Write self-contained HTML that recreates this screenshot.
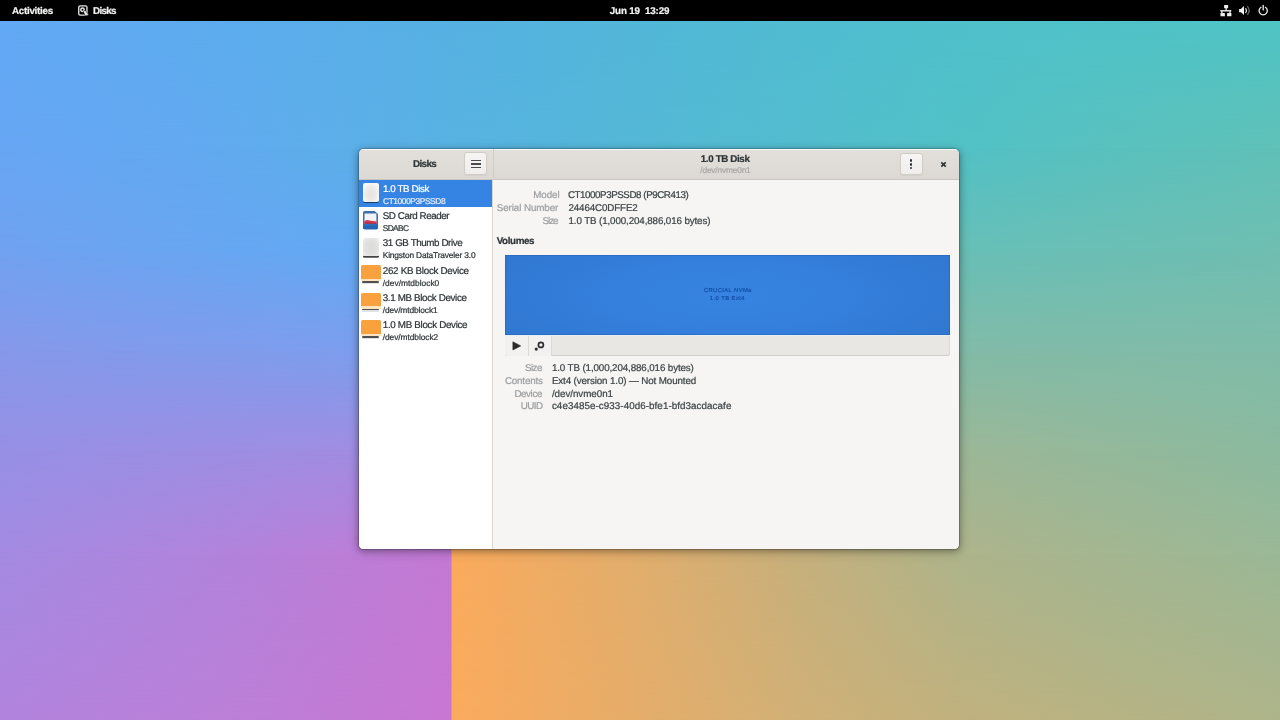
<!DOCTYPE html>
<html>
<head>
<meta charset="utf-8">
<title>Disks</title>
<style>
*{margin:0;padding:0;box-sizing:border-box;}
html,body{width:1280px;height:720px;overflow:hidden;}
body{font-family:"Liberation Sans",sans-serif;font-size:10px;color:#2e3436;position:relative;background:#5fa8f0;}
.a{position:absolute;}
.t{position:absolute;white-space:nowrap;line-height:14px;text-rendering:geometricPrecision;-webkit-text-stroke:0.22px currentColor;}
.wl{position:absolute;left:0;top:0;width:1280px;height:720px;}
#top{position:absolute;left:0;top:0;width:1280px;height:20.6px;background:#000;}
#win{position:absolute;left:359px;top:149px;width:600px;height:400px;border-radius:5px 5px 4.5px 4.5px;
  background:#f6f5f4;overflow:hidden;}
#shadow{position:absolute;left:359px;top:149px;width:600px;height:400px;border-radius:5px 5px 4.5px 4.5px;
  box-shadow:0 0 0 1px rgba(0,0,0,0.17),0 1.5px 6px 0.5px rgba(0,0,0,0.30),0 3px 12px 1px rgba(0,0,0,0.13);}
#hdr{position:absolute;left:0;top:0;width:600px;height:31px;
  background:linear-gradient(to bottom,#e3e0dc 0%,#dcd8d4 100%);border-bottom:1px solid #cbc5c0;
  box-shadow:inset 0 1px rgba(255,255,255,0.85);}
.btn{position:absolute;border:1px solid #d2ccc7;border-radius:3px;
  background:linear-gradient(to bottom,#f6f5f3,#f0eeec);box-shadow:0 1px 1px rgba(0,0,0,0.05);}
.ob{position:absolute;left:2.2px;width:19.5px;height:13.9px;background:#f9a13f;border-radius:1.5px 1.5px 0 0;}
.oc{position:absolute;left:2.2px;width:19.5px;height:2.2px;background:#fde3c0;border-radius:0 0 1px 1px;}
.od{position:absolute;left:3.2px;width:16.8px;height:1.5px;background:#505050;border-radius:1px;}
.og{position:absolute;left:3.2px;width:16.8px;height:1.3px;background:#dfe3e4;border-radius:1px;}
</style>
</head>
<body>
<div class="wl" style="background:linear-gradient(to right,#62a9f5 0px,#5aaeea 320px,#56b1e2 452px,#52b7d8 640px,#4fc1cb 960px,#4fc4c5 1280px);"></div>
<div class="wl" style="background:linear-gradient(to right,#67a6f4 0px,#63a9f1 180px,#5cafe8 355px,#58b2e2 452px,#54b8d6 640px,#52c1c6 960px,#5ac1be 1120px,#60c1b8 1280px);-webkit-mask-image:linear-gradient(to bottom,rgba(0,0,0,0) 21px,#000 148px);mask-image:linear-gradient(to bottom,rgba(0,0,0,0) 21px,#000 148px);"></div>
<div class="wl" style="background:linear-gradient(to right,#70a2f0 0px,#62a9f3 355px,#60aaf0 450.5px,#7fb6c4 452.5px,#72bbc0 640px,#67bfb7 960px,#6fbeb1 1280px);-webkit-mask-image:linear-gradient(to bottom,rgba(0,0,0,0) 148px,#000 250px);mask-image:linear-gradient(to bottom,rgba(0,0,0,0) 148px,#000 250px);"></div>
<div class="wl" style="background:linear-gradient(to right,#8698ea 0px,#7c9eed 355px,#7fa0ea 450.5px,#b5b296 452.5px,#a0b6a0 640px,#82bba8 960px,#80bca9 1280px);-webkit-mask-image:linear-gradient(to bottom,rgba(0,0,0,0) 250px,#000 350px);mask-image:linear-gradient(to bottom,rgba(0,0,0,0) 250px,#000 350px);"></div>
<div class="wl" style="background:linear-gradient(to right,#9690e5 0px,#a08de2 355px,#a889df 450.5px,#e0ac72 452.5px,#c4b184 640px,#9bb797 960px,#8bba9f 1280px);-webkit-mask-image:linear-gradient(to bottom,rgba(0,0,0,0) 350px,#000 450px);mask-image:linear-gradient(to bottom,rgba(0,0,0,0) 350px,#000 450px);"></div>
<div class="wl" style="background:linear-gradient(to right,#a48ae2 0px,#b283db 225px,#c479d4 450.5px,#fbab5c 452.5px,#e1ae6d 640px,#c6b07c 800px,#aeb48b 960px,#a3b691 1120px,#9bb896 1280px);-webkit-mask-image:linear-gradient(to bottom,rgba(0,0,0,0) 450px,#000 555px);mask-image:linear-gradient(to bottom,rgba(0,0,0,0) 450px,#000 555px);"></div>
<div class="wl" style="background:linear-gradient(to right,#b183dc 0px,#bb7fd8 225px,#c877d2 450.5px,#faaa5d 452.5px,#e5ad6a 640px,#d0b077 800px,#c0b17e 960px,#b6b384 1120px,#aeb48a 1280px);-webkit-mask-image:linear-gradient(to bottom,rgba(0,0,0,0) 555px,#000 718px);mask-image:linear-gradient(to bottom,rgba(0,0,0,0) 555px,#000 718px);"></div>


<div id="top">
  <!-- disks app icon -->
  <svg class="a" style="left:77px;top:4px;" width="13" height="13" viewBox="0 0 13 13">
    <rect x="1.75" y="1.8" width="8.2" height="9.3" rx="1.4" fill="none" stroke="#e6e6e6" stroke-width="1.35"/>
    <circle cx="5.5" cy="5.8" r="1.7" fill="none" stroke="#e6e6e6" stroke-width="1.5"/>
    <path d="M6.3 7.3 L8.2 6.2 L11.2 10.2 L11.2 11.6 L8.0 11.6 Z" fill="#e6e6e6" stroke="#000" stroke-width="0.45"/>
  </svg>
  <!-- network -->
  <svg class="a" style="left:1219px;top:4px;" width="14" height="14" viewBox="0 0 14 14">
    <g fill="#f0f0f0">
      <rect x="5.1" y="0.9" width="4" height="3.4" rx="0.4"/>
      <rect x="6.5" y="4" width="1.3" height="2.4"/>
      <rect x="1.3" y="6.1" width="11" height="1.4"/>
      <rect x="2.2" y="7" width="1.3" height="2.4"/>
      <rect x="10.4" y="7" width="1.3" height="2.4"/>
      <rect x="1.5" y="9.1" width="4.4" height="3.2" rx="0.4"/>
      <rect x="8.1" y="9.1" width="4.3" height="3.2" rx="0.4"/>
    </g>
  </svg>
  <!-- volume -->
  <svg class="a" style="left:1238px;top:4px;" width="14" height="14" viewBox="0 0 14 14">
    <path d="M1.1 5.0 L2.9 5.0 L6.0 2.0 L6.0 11.1 L2.9 8.2 L1.1 8.2 Z" fill="#f0f0f0"/>
    <path d="M7.7 4.6 Q9.3 6.6 7.7 8.6" fill="none" stroke="#e0e0e0" stroke-width="1.2" stroke-linecap="round"/>
    <path d="M9.6 2.7 Q12.7 6.6 9.6 10.5" fill="none" stroke="#6a6a6a" stroke-width="1.2" stroke-linecap="round"/>
  </svg>
  <!-- power -->
  <svg class="a" style="left:1256px;top:4px;" width="14" height="14" viewBox="0 0 14 14">
    <path d="M5.0 3.3 A4.1 4.1 0 1 0 9.4 3.3" fill="none" stroke="#f0f0f0" stroke-width="1.3" stroke-linecap="round"/>
    <path d="M7.2 1.4 L7.2 5.9" fill="none" stroke="#f0f0f0" stroke-width="1.3" stroke-linecap="round"/>
  </svg>
</div>

<div id="shadow"></div>
<div id="win">
  <div id="hdr">
    <!-- hamburger -->
    <div class="btn" style="left:105.3px;top:3.4px;width:23px;height:22.4px;"></div>
    <div class="a" style="left:112px;top:11px;width:10px;height:1.45px;background:#474b4d;"></div>
    <div class="a" style="left:112px;top:14.4px;width:10px;height:1.45px;background:#474b4d;"></div>
    <div class="a" style="left:112px;top:17.7px;width:10px;height:1.45px;background:#474b4d;"></div>
    <!-- split -->
    <div class="a" style="left:133.7px;top:0;width:1px;height:31px;background:#d1ccc7;"></div>
    <!-- menu -->
    <div class="btn" style="left:540.6px;top:4.2px;width:23px;height:21.6px;"></div>
    <div class="a" style="left:550.95px;top:10.4px;width:2.5px;height:2.5px;border-radius:50%;background:#2e3436;"></div>
    <div class="a" style="left:550.95px;top:14.0px;width:2.5px;height:2.5px;border-radius:50%;background:#2e3436;"></div>
    <div class="a" style="left:550.95px;top:17.6px;width:2.5px;height:2.5px;border-radius:50%;background:#2e3436;"></div>
    <!-- close -->
    <svg class="a" style="left:580px;top:10.8px;" width="9" height="9" viewBox="0 0 9 9">
      <path d="M2.3 2.3 L6.7 6.7 M6.7 2.3 L2.3 6.7" stroke="#2e3436" stroke-width="1.65" stroke-linecap="butt" fill="none"/>
    </svg>
  </div>
  <!-- sidebar -->
  <div class="a" style="left:0;top:31px;width:133px;height:369px;background:#fff;"></div>
  <div class="a" style="left:133px;top:31px;width:1px;height:369px;background:#d9d5d1;"></div>
  <div class="a" style="left:0;top:31px;width:133px;height:27.2px;background:#3584e4;"></div>

  <!-- icon: ssd -->
  <div class="a" style="left:3.7px;top:34.2px;width:16.2px;height:19.6px;">
    <div class="a" style="left:0;top:0;width:16.2px;height:18.7px;border-radius:2px;background:radial-gradient(ellipse at 50% 55%,#e7e4df 0%,#ecebe7 45%,#fafaf9 82%);box-shadow:0 1.1px 0 #1b3d6e;"></div>
  </div>
  <!-- icon: sd card -->
  <svg class="a" style="left:4.2px;top:62.2px;" width="15" height="18.6" viewBox="0 0 15 18.6">
    <defs>
      <linearGradient id="sky" x1="0" y1="0" x2="0" y2="1"><stop offset="0" stop-color="#eef3fb"/><stop offset="0.55" stop-color="#f8f4f4"/><stop offset="0.8" stop-color="#f7d3d6"/><stop offset="1" stop-color="#f2c0c6"/></linearGradient>
      <clipPath id="sdc"><path d="M1.8 0 H11.6 L15 3.0 V16.8 Q15 18.6 13.2 18.6 H1.8 Q0 18.6 0 16.8 V1.8 Q0 0 1.8 0 Z"/></clipPath>
    </defs>
    <g clip-path="url(#sdc)">
      <rect x="0" y="0" width="15" height="18.6" fill="#416dab"/>
      <rect x="1.5" y="2.5" width="11.9" height="10.6" fill="url(#sky)"/>
      <path d="M1.5 10.3 Q3.5 8.6 5.6 9.2 T9.4 10.0 T13.4 10.4 L13.4 13.2 L1.5 13.2 Z" fill="#cf3a50"/>
      <path d="M1.5 11.6 Q4.5 10.6 7.5 11.5 T13.4 11.4 L13.4 13.2 L1.5 13.2 Z" fill="#b5324f"/>
      <rect x="0" y="12.9" width="15" height="5.7" fill="#2565b6"/>
      <rect x="1.2" y="13.4" width="12.6" height="0.9" fill="#5a86c8" opacity="0.55"/>
    </g>
  </svg>
  <!-- icon: thumb -->
  <div class="a" style="left:4px;top:89.4px;width:15.8px;height:19.4px;">
    <div class="a" style="left:0;top:0;width:15.8px;height:17.6px;border-radius:2px 2px 1.5px 1.5px;background:radial-gradient(ellipse at 50% 50%,#dbdbdb 0%,#e0e0df 50%,#ececeb 90%);box-shadow:0 1.7px 0 #464646;"></div>
  </div>
  <!-- icon: block x3 -->
  <div class="a" style="left:0;top:116.2px;width:24px;height:20px;"><div class="ob" style="top:0;"></div><div class="oc" style="top:13.9px;"></div><div class="od" style="top:16.3px;"></div><div class="og" style="top:17.9px;"></div></div>
  <div class="a" style="left:0;top:143.6px;width:24px;height:20px;"><div class="ob" style="top:0;"></div><div class="oc" style="top:13.9px;"></div><div class="od" style="top:16.3px;"></div><div class="og" style="top:17.9px;"></div></div>
  <div class="a" style="left:0;top:171px;width:24px;height:20px;"><div class="ob" style="top:0;"></div><div class="oc" style="top:13.9px;"></div><div class="od" style="top:16.3px;"></div><div class="og" style="top:17.9px;"></div></div>

  <!-- volume grid -->
  <div class="a" style="left:146px;top:106px;width:445px;height:79.8px;background:radial-gradient(ellipse 60% 90% at 50% 50%,#3683e1 0%,#347fdb 50%,#3077d0 100%);box-shadow:inset 0 0 0 1px rgba(38,98,178,0.55);"></div>
  <div class="a" style="left:146px;top:185.8px;width:445px;height:21.7px;background:#e9e7e4;border-radius:0 0 3px 3px;box-shadow:inset 0 1px 0 #e6eef8,inset 0 -1px 0 #d3cec9,inset 1px 0 0 #ddd9d5,inset -1px 0 0 #ddd9d5;"></div>
  <div class="a" style="left:146.3px;top:186.8px;width:24.1px;height:20px;background:#f2f1ef;border-right:1px solid #dcd8d4;border-radius:0 0 0 3px;"></div>
  <div class="a" style="left:170.4px;top:186.8px;width:22.6px;height:20px;background:#f2f1ef;border-right:1px solid #dcd8d4;"></div>
  <!-- play -->
  <svg class="a" style="left:152px;top:191px;" width="12" height="12" viewBox="0 0 12 12">
    <path d="M1.9 1.8 L9.7 5.9 L1.9 10.0 Z" fill="#2a2a2a" stroke="#2a2a2a" stroke-width="0.6" stroke-linejoin="round"/>
  </svg>
  <!-- gears -->
  <svg class="a" style="left:174px;top:190px;" width="14" height="14" viewBox="0 0 14 14">
    <circle cx="7.9" cy="5.9" r="2.5" fill="none" stroke="#2e2e2e" stroke-width="1.7"/>
    <circle cx="3.25" cy="10.1" r="1.55" fill="#2e2e2e"/>
  </svg>
</div>

<div id="txt" style="position:absolute;left:0;top:0;width:1280px;height:720px;will-change:transform;transform:translateZ(0);">
<div class="t" style="left:11.90px;top:5px;font-size:9.8px;letter-spacing:-0.251px;color:#f2f2f2;font-weight:bold;">Activities</div>
<div class="t" style="left:93.10px;top:5px;font-size:9.8px;letter-spacing:-0.674px;color:#f2f2f2;font-weight:bold;">Disks</div>
<div class="t" style="left:609.80px;top:5px;font-size:9.8px;letter-spacing:-0.157px;color:#f2f2f2;font-weight:bold;">Jun 19&nbsp; 13:29</div>
<div class="t" style="left:412.90px;top:158px;font-size:9.8px;letter-spacing:-0.586px;color:#2e3436;font-weight:bold;">Disks</div>
<div class="t" style="left:700.80px;top:153px;font-size:9.8px;letter-spacing:-0.377px;color:#2e3436;font-weight:bold;">1.0 TB Disk</div>
<div class="t" style="left:700.30px;top:163px;font-size:8.4px;letter-spacing:-0.196px;color:#a9a7a4;">/dev/nvme0n1</div>
<div class="t" style="left:383.00px;top:183px;font-size:9.8px;letter-spacing:-0.413px;color:#ffffff;">1.0 TB Disk</div>
<div class="t" style="left:383.00px;top:194px;font-size:8.4px;letter-spacing:-0.412px;color:#e4eefb;">CT1000P3PSSD8</div>
<div class="t" style="left:382.75px;top:210px;font-size:9.8px;letter-spacing:-0.435px;color:#2e3436;">SD Card Reader</div>
<div class="t" style="left:382.75px;top:221px;font-size:8.4px;letter-spacing:-0.639px;color:#2e3436;">SDABC</div>
<div class="t" style="left:382.75px;top:237px;font-size:9.8px;letter-spacing:-0.404px;color:#2e3436;">31 GB Thumb Drive</div>
<div class="t" style="left:382.75px;top:248px;font-size:8.4px;letter-spacing:-0.174px;color:#2e3436;">Kingston DataTraveler 3.0</div>
<div class="t" style="left:382.75px;top:265px;font-size:9.8px;letter-spacing:-0.288px;color:#2e3436;">262 KB Block Device</div>
<div class="t" style="left:382.75px;top:276px;font-size:8.4px;letter-spacing:0.014px;color:#2e3436;">/dev/mtdblock0</div>
<div class="t" style="left:382.75px;top:292px;font-size:9.8px;letter-spacing:-0.344px;color:#2e3436;">3.1 MB Block Device</div>
<div class="t" style="left:382.75px;top:303px;font-size:8.4px;letter-spacing:-0.109px;color:#2e3436;">/dev/mtdblock1</div>
<div class="t" style="left:382.75px;top:319px;font-size:9.8px;letter-spacing:-0.310px;color:#2e3436;">1.0 MB Block Device</div>
<div class="t" style="left:382.75px;top:330px;font-size:8.4px;letter-spacing:-0.063px;color:#2e3436;">/dev/mtdblock2</div>
<div class="t" style="left:533.25px;top:189px;font-size:9.8px;letter-spacing:-0.064px;color:#9c9ea0;">Model</div>
<div class="t" style="left:496.70px;top:202px;font-size:9.8px;letter-spacing:-0.079px;color:#9c9ea0;">Serial Number</div>
<div class="t" style="left:542.60px;top:215px;font-size:9.8px;letter-spacing:-1.036px;color:#9c9ea0;">Size</div>
<div class="t" style="left:567.90px;top:189px;font-size:9.8px;letter-spacing:-0.447px;color:#3d4446;">CT1000P3PSSD8 (P9CR413)</div>
<div class="t" style="left:568.50px;top:202px;font-size:9.8px;letter-spacing:-0.140px;color:#3d4446;">24464C0DFFE2</div>
<div class="t" style="left:568.50px;top:215px;font-size:9.8px;letter-spacing:-0.123px;color:#3d4446;">1.0 TB (1,000,204,886,016 bytes)</div>
<div class="t" style="left:496.70px;top:235px;font-size:9.8px;letter-spacing:-0.376px;color:#2e3436;font-weight:bold;">Volumes</div>
<div class="t" style="left:703.90px;top:284px;font-size:5.8px;letter-spacing:0.415px;color:#164fa9;">CRUCIAL NVMe</div>
<div class="t" style="left:709.80px;top:292px;font-size:5.8px;letter-spacing:0.454px;color:#164fa9;">1.0 TB Ext4</div>
<div class="t" style="left:525.00px;top:362px;font-size:9.8px;letter-spacing:-0.570px;color:#9c9ea0;">Size</div>
<div class="t" style="left:505.00px;top:375px;font-size:9.8px;letter-spacing:-0.202px;color:#9c9ea0;">Contents</div>
<div class="t" style="left:514.40px;top:388px;font-size:9.8px;letter-spacing:-0.399px;color:#9c9ea0;">Device</div>
<div class="t" style="left:520.75px;top:400px;font-size:9.8px;letter-spacing:-0.574px;color:#9c9ea0;">UUID</div>
<div class="t" style="left:551.90px;top:362px;font-size:9.8px;letter-spacing:-0.123px;color:#3d4446;">1.0 TB (1,000,204,886,016 bytes)</div>
<div class="t" style="left:551.90px;top:375px;font-size:9.8px;letter-spacing:-0.124px;color:#3d4446;">Ext4 (version 1.0) — Not Mounted</div>
<div class="t" style="left:551.90px;top:388px;font-size:9.8px;letter-spacing:-0.036px;color:#3d4446;">/dev/nvme0n1</div>
<div class="t" style="left:551.90px;top:400px;font-size:9.8px;letter-spacing:0.069px;color:#3d4446;">c4e3485e-c933-40d6-bfe1-bfd3acdacafe</div>
</div>
</body>
</html>
